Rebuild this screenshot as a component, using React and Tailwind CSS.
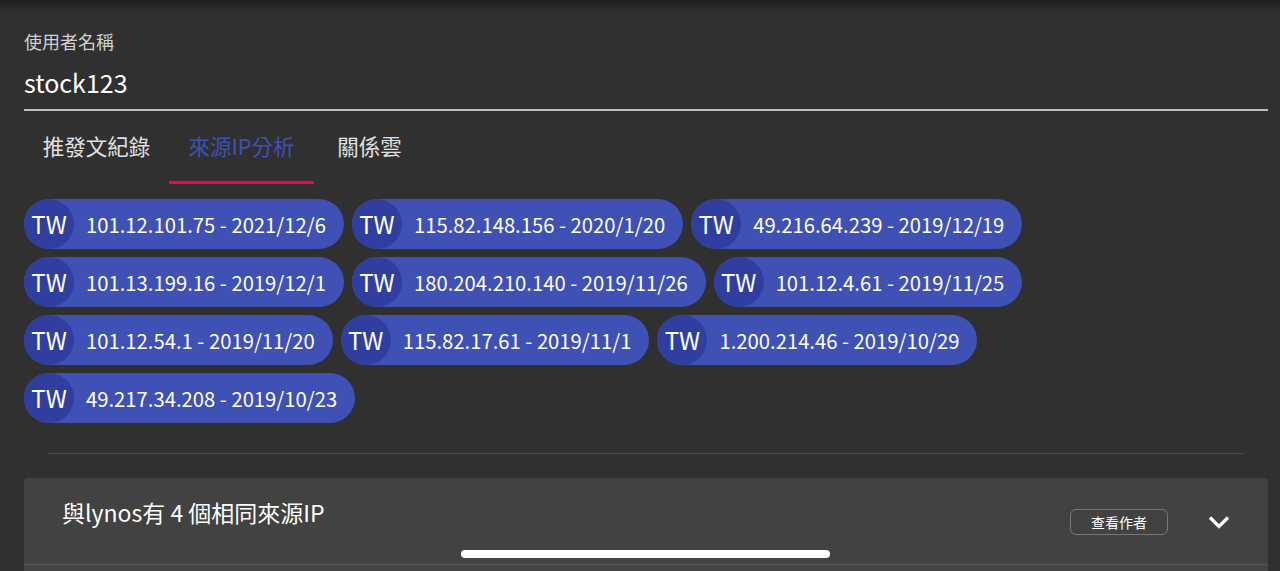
import React from "react";

const ips = [
  { ip: "101.12.101.75", date: "2021/12/6" },
  { ip: "115.82.148.156", date: "2020/1/20" },
  { ip: "49.216.64.239", date: "2019/12/19" },
  { ip: "101.13.199.16", date: "2019/12/1" },
  { ip: "180.204.210.140", date: "2019/11/26" },
  { ip: "101.12.4.61", date: "2019/11/25" },
  { ip: "101.12.54.1", date: "2019/11/20" },
  { ip: "115.82.17.61", date: "2019/11/1" },
  { ip: "1.200.214.46", date: "2019/10/29" },
  { ip: "49.217.34.208", date: "2019/10/23" },
];

const tabs = [
  { label: "推發文紀錄", w: "w-[145px]" },
  { label: "來源IP分析", w: "w-[145px]", active: true },
  { label: "關係雲", w: "w-[111px]" },
];

export default function App() {
  return (
    <div className="relative h-[571px] overflow-hidden bg-[#303030] text-white font-['Noto_Sans_CJK_TC','Noto_Sans',sans-serif]">
      {/* app bar shadow */}
      <div className="absolute inset-x-0 top-0 h-3 bg-gradient-to-b from-[#1e1e1e] to-[#303030]" />

      <div className="pl-6 pr-3 pt-[30px]">
        {/* username field */}
        <div className="text-[18px] leading-[22px] text-[#d0d0d0]">使用者名稱</div>
        <div className="mt-[14px] border-b-2 border-[#bdbdbd] pb-[11px] text-[25px] leading-[32px] text-white">
          stock123
        </div>

        {/* tabs */}
        <div className="mt-px flex">
          {tabs.map((t) => (
            <div
              key={t.label}
              className={`${t.w} flex h-[72px] flex-col items-center justify-between`}
            >
              <div
                className={`mt-[19px] text-[21.5px] leading-[30px] ${
                  t.active ? "text-[#3f51b5]" : "text-[#e0e0e0]"
                }`}
              >
                {t.label}
              </div>
              <div className={`h-[3px] w-full ${t.active ? "bg-[#f50057]" : ""}`} />
            </div>
          ))}
        </div>

        {/* ip chips */}
        <div className="mt-[15px] flex flex-wrap gap-x-2 gap-y-2 pr-[240px]">
          {ips.map((c) => (
            <div
              key={c.ip}
              className="flex h-[50px] items-center rounded-full bg-[#3f51b5] pr-[18px]"
            >
              <div className="flex h-[50px] w-[50px] items-center justify-center rounded-full bg-[#303f9f] text-[24px] leading-none text-white">
                TW
              </div>
              <span className="pl-[12px] pt-[2px] text-[20.25px] leading-none text-white">
                {c.ip} - {c.date}
              </span>
            </div>
          ))}
        </div>

        <div className="mx-6 mt-[30px] h-px bg-[#4a4a4a]" />

        {/* same-ip accordion */}
        <div className="mt-6 rounded-t bg-[#424242]">
          <div className="flex h-[87px] items-start border-b border-[#555] pl-[38px] pr-[31px]">
            <div className="mt-[18px] text-[23px] leading-[32px] text-white">
              與lynos有 4 個相同來源IP
            </div>
            <div className="ml-auto mt-[26px] flex items-center gap-[33px]">
              <button className="h-[26px] w-[98px] rounded-md border border-[#777] text-[14px] leading-none text-white">
                查看作者
              </button>
              <svg viewBox="0 0 24 24" className="h-9 w-9" fill="none" stroke="white" strokeWidth="2.2">
                <polyline points="6,9 12,15 18,9" />
              </svg>
            </div>
          </div>
          <div className="h-8 bg-[#444]" />
        </div>
      </div>

      {/* home indicator */}
      <div className="absolute left-[461px] top-[550px] h-2 w-[369px] rounded-full bg-white" />
    </div>
  );
}
